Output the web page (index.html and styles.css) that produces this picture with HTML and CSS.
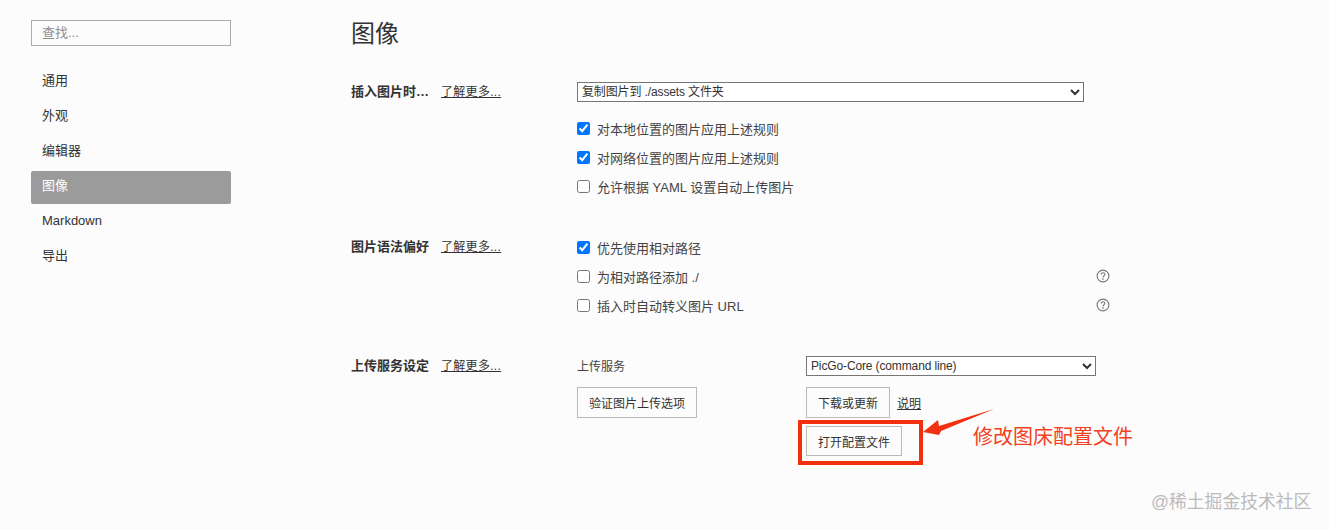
FILE: index.html
```html
<!DOCTYPE html>
<html lang="zh-CN">
<head>
<meta charset="utf-8">
<title>图像</title>
<link rel="stylesheet" href="styles.css">
</head>
<body>
<div class="app">
  <aside class="sidebar">
    <input class="search" type="text" placeholder="查找...">
    <nav class="nav">
      <a class="nav-item">通用</a>
      <a class="nav-item">外观</a>
      <a class="nav-item">编辑器</a>
      <a class="nav-item active">图像</a>
      <a class="nav-item">Markdown</a>
      <a class="nav-item">导出</a>
    </nav>
  </aside>
  <main class="main">
    <h1 class="title">图像</h1>

    <section class="section first">
      <div class="section-head"><span class="label">插入图片时…</span><a class="more">了解更多...</a></div>
      <div class="section-body">
        <select class="select wide"><option>复制图片到 ./assets 文件夹</option></select>
        <div class="checks after-select">
          <label class="check"><input type="checkbox" checked><span>对本地位置的图片应用上述规则</span></label>
          <label class="check"><input type="checkbox" checked><span>对网络位置的图片应用上述规则</span></label>
          <label class="check"><input type="checkbox"><span>允许根据 YAML 设置自动上传图片</span></label>
        </div>
      </div>
    </section>

    <section class="section second">
      <div class="section-head"><span class="label">图片语法偏好</span><a class="more">了解更多...</a></div>
      <div class="section-body">
        <div class="checks">
          <label class="check"><input type="checkbox" checked><span>优先使用相对路径</span></label>
          <label class="check"><input type="checkbox"><span>为相对路径添加 ./</span>
            <svg class="help" viewBox="0 0 14 14"><circle cx="7" cy="7" r="5.9"/><path d="M5.1 5.6C5.1 4.5 5.9 3.8 7 3.8C8.1 3.8 8.9 4.5 8.9 5.4C8.9 6.6 7 6.8 7 8.4"/><circle class="dot" cx="7" cy="10.1" r=".8"/></svg></label>
          <label class="check"><input type="checkbox"><span>插入时自动转义图片 URL</span>
            <svg class="help" viewBox="0 0 14 14"><circle cx="7" cy="7" r="5.9"/><path d="M5.1 5.6C5.1 4.5 5.9 3.8 7 3.8C8.1 3.8 8.9 4.5 8.9 5.4C8.9 6.6 7 6.8 7 8.4"/><circle class="dot" cx="7" cy="10.1" r=".8"/></svg></label>
        </div>
      </div>
    </section>

    <section class="section third">
      <div class="section-head"><span class="label">上传服务设定</span><a class="more">了解更多...</a></div>
      <div class="upload">
        <span class="upload-label">上传服务</span>
        <select class="select service"><option>PicGo-Core (command line)</option></select>
        <div class="cell"><button class="btn verify">验证图片上传选项</button></div>
        <div class="cell stack">
          <div class="btn-row"><button class="btn download">下载或更新</button><a class="link">说明</a></div>
          <button class="btn open">打开配置文件</button>
        </div>
      </div>
    </section>
  </main>
</div>

<svg class="arrow" viewBox="0 0 80 34"><polygon points="1,24 16,12 17,18 72,1 19,23 17,27"/></svg>
<div class="redbox"></div>
<div class="note">修改图床配置文件</div>
<div class="watermark">@稀土掘金技术社区</div>
</body>
</html>
```
FILE: styles.css
```css
* { box-sizing: border-box; }
html, body { margin: 0; height: 530px; overflow: hidden; }
body {
  position: relative;
  background: #fcfcfc;
  color: #333;
  font-family: "Liberation Sans", "Noto Sans CJK SC", sans-serif;
  font-size: 13px;
}
.app { display: flex; }
.sidebar { width: 200px; margin-left: 31px; margin-right: 120px; padding-top: 20px; flex: none; }
.search {
  display: block; width: 200px; height: 26px; padding: 0 10px 2px;
  border: 1px solid #ababab; border-radius: 0; background: #fcfcfc;
  font: inherit; font-size: 13px; outline: none;
}
.search::placeholder { color: #8f8f8f; }
.nav { margin-top: 20px; display: flex; flex-direction: column; gap: 2px; }
.nav-item {
  height: 33px; line-height: 29px; padding-left: 11px;
  border-radius: 2px; color: #333;
}
.nav-item.active { background: #9b9b9b; color: #fff; }

.main { flex: none; width: 760px; }
.title { margin: 16px 0 0; font-size: 24px; font-weight: 400; line-height: 36px; color: #333; }
.section { display: flex; }
.section.first { margin-top: 30px; }
.section.second { margin-top: 41px; }
.section.third { margin-top: 41px; }
.section-head { width: 226px; flex: none; display: flex; height: 17px; align-items: center; }
.label { width: 90px; font-weight: 700; white-space: nowrap; flex: none; }
.more { font-size: 12px; letter-spacing: 0.3px; color: #333; text-decoration: underline; white-space: nowrap; }
.section-body { flex: 1; }
.select {
  display: block; height: 20px; padding: 0; background: #fff;
  font: inherit; font-size: 12px; letter-spacing: -0.13px; color: #333;
  border: 1px solid #767676; border-radius: 0;
}
.select.wide { width: 507px; }
.select.service { width: 290px; }
.checks { display: flex; flex-direction: column; gap: 9px; }
.checks.after-select { margin-top: 16px; }
.check { display: flex; align-items: center; height: 20px; color: #444; position: relative; }
.check input { margin: 0 7px 0 0; width: 13px; height: 13px; flex: none; }
.help { width: 14px; height: 14px; margin-left: auto; margin-right: 1px; fill: none; stroke: #777; stroke-width: 1.1; }
.help .dot { fill: #777; stroke: none; }
.upload { display: grid; grid-template-columns: 229px 290px; row-gap: 9px; align-items: start; }
.upload-label { line-height: 22px; font-size: 12px; color: #444; }
.btn {
  display: block; padding: 0; background: #fcfcfc; color: #333;
  border: 1px solid #bbb; border-radius: 0; font: inherit; font-size: 12px;
}
.verify { width: 120px; height: 31px; }
.download { width: 84px; height: 31px; }
.btn-row { display: flex; align-items: center; gap: 7px; }
.link { font-size: 12px; color: #333; text-decoration: underline; }
.open { width: 96px; height: 30px; margin-top: 8px; }

.redbox {
  position: absolute; left: 798px; top: 420px; width: 125px; height: 45px;
  border: 4px solid #f2300f;
}
.arrow { position: absolute; left: 922px; top: 408px; width: 80px; height: 34px; fill: #f2300f; }
.note { position: absolute; left: 973px; top: 423px; font-size: 20px; line-height: 28px; color: #f2401f; white-space: nowrap; }
.watermark { position: absolute; left: 1151px; top: 491px; font-size: 17.8px; line-height: 22px; color: #bbb; white-space: nowrap; }
```
